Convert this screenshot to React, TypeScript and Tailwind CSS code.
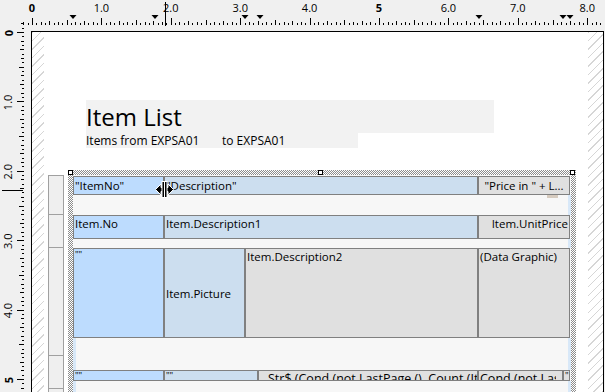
import React from 'react';

// ruler geometry: unit 0 sits at x/y = 32, one unit is ~69.4px, 16 subdivisions
const ORIGIN = 32;
const UNIT = 69.4;
const STEP = UNIT / 16;

const LABELS = ['0', '1.0', '2.0', '3.0', '4.0', '5', '6.0', '7.0', '8.0'];
const MARKERS = [73, 155, 245, 260, 479, 563, 570];

function tickLen(i: number) {
  const m = ((i % 16) + 16) % 16;
  if (m === 0) return 7;
  if (m === 8) return 5;
  if (m % 4 === 0) return 4;
  if (m % 2 === 0) return 3;
  return 2;
}

function TopRuler() {
  const ticks = [];
  for (let i = -2; i < 140; i++) {
    const x = Math.round(ORIGIN + i * STEP) + 0.5;
    if (x > 605) break;
    ticks.push(<line key={i} x1={x} x2={x} y1={25 - tickLen(i)} y2={25} stroke="#000" />);
  }
  // a couple of ticks of the side ruler that poke above the page
  const side = [1, 2].map((k) => {
    const y = Math.round(ORIGIN - k * STEP) + 0.5;
    return <line key={`s${k}`} x1={24 - tickLen(-k)} x2={24} y1={y} y2={y} stroke="#000" />;
  });
  return (
    <svg width="605" height="31" className="block">
      {ticks}
      {side}
      {LABELS.map((l, i) => (
        <text
          key={l}
          x={ORIGIN + i * UNIT}
          y={12}
          textAnchor="middle"
          fontSize="11"
          fontWeight={l === '0' || l === '5' ? 700 : 400}
          fontFamily="'Open Sans', sans-serif"
          fill="#000"
        >
          {l}
        </text>
      ))}
      {MARKERS.map((x) => (
        <polygon key={x} points={`${x - 3.5},15 ${x + 3.5},15 ${x},19`} fill="#000" />
      ))}
      <line x1={165.5} x2={165.5} y1={2} y2={26} stroke="#000" />
    </svg>
  );
}

function SideRuler() {
  const ticks = [];
  for (let i = 0; i < 90; i++) {
    const y = Math.round(i * STEP) + 0.5;
    if (y > 361) break;
    ticks.push(<line key={i} x1={24 - tickLen(i)} x2={24} y1={y + 1} y2={y + 1} stroke="#000" />);
  }
  return (
    <svg width="31" height="361" className="block overflow-visible">
      {ticks}
      {LABELS.map((l, i) => {
        const y = 2 + i * UNIT;
        return (
          <text
            key={l}
            x={8}
            y={y}
            transform={`rotate(-90 8 ${y})`}
            textAnchor="middle"
            dominantBaseline="central"
            fontSize="11"
            fontWeight={l === '0' || l === '5' ? 700 : 400}
            fontFamily="'Open Sans', sans-serif"
            fill="#000"
          >
            {l}
          </text>
        );
      })}
      <line x1={2} x2={23} y1={159.5} y2={159.5} stroke="#000" />
    </svg>
  );
}

// the horizontal split cursor hovering over the column seam
function SplitCursor() {
  return (
    <svg width="19" height="17" viewBox="0 0 19 17" className="absolute left-[87px] top-[11px]">
      <g fill="#000" stroke="#fff" strokeWidth="1" strokeLinejoin="miter">
        <path d="M0.5 8.5 L6 3 L6 6.5 L7.5 6.5 L7.5 10.5 L6 10.5 L6 14 Z" />
        <path d="M18.5 8.5 L13 3 L13 6.5 L11.5 6.5 L11.5 10.5 L13 10.5 L13 14 Z" />
        <rect x="7" y="0.5" width="2.5" height="16" />
        <rect x="9.5" y="0.5" width="2.5" height="16" />
      </g>
    </svg>
  );
}

const cell = 'border border-[#808080] overflow-hidden whitespace-nowrap px-[1px] text-black';
const blue = 'bg-[#bddcfe]';
const steel = 'bg-[#ccdeef]';
const grey = 'bg-[#e0e0e0]';
const hatch =
  'bg-[repeating-linear-gradient(135deg,#d6d6d6_0px,#d6d6d6_1px,transparent_1px,transparent_6px)]';

function ReportTable() {
  return (
    <div className="relative ml-[4px] h-full w-[508px] bg-[repeating-conic-gradient(#8c8c8c_0_25%,#ffffff_0_50%)] bg-[length:2px_2px] px-[5px] pt-[5px]">
      <div className="flex h-full flex-col bg-[#f7f7f7] text-[11.5px] leading-[15px]">
        {/* header */}
        <div className="mt-[1px] flex h-[19px]">
          <div className={`${cell} ${blue} w-[91px] pt-[1px]`}>"ItemNo"</div>
          <div className={`${cell} ${steel} w-[314px] pt-[1px]`}>"Description"</div>
          <div className={`${cell} ${grey} w-[92px] pt-[1px] text-center`}>"Price in " + L...</div>
        </div>
        <div className="h-[20px] border-r-[3px] border-[#d8e8f8]" />

        {/* detail 1 */}
        <div className="flex h-[24px]">
          <div className={`${cell} ${blue} w-[91px]`}>Item.No</div>
          <div className={`${cell} ${steel} w-[314px]`}>Item.Description1</div>
          <div className={`${cell} ${grey} w-[92px] text-right`}>Item.UnitPrice</div>
        </div>
        <div className="h-[9px] border-r-[3px] border-[#d8e8f8]" />

        {/* detail 2 */}
        <div className="flex h-[90px]">
          <div className={`${cell} ${blue} w-[91px] text-[9px] leading-[12px]`}>""</div>
          <div className={`${cell} ${steel} flex w-[81px] items-center`}>Item.Picture</div>
          <div className={`${cell} ${grey} w-[233px]`}>Item.Description2</div>
          <div className={`${cell} ${grey} w-[92px]`}>(Data Graphic)</div>
        </div>
        <div className="h-[32px] border-l-[3px] border-r-[3px] border-[#d8e8f8]" />

        {/* page footer */}
        <div className="flex h-[11px] text-[12.5px] leading-[15px]">
          <div className={`${cell} ${blue} w-[91px] text-[9px] leading-[10px]`}>""</div>
          <div className={`${cell} ${steel} w-[94px] text-[9px] leading-[10px]`}>""</div>
          <div className={`${cell} ${grey} w-[220px] pl-[9px]`}>Str$ (Cond (not LastPage (), Count (Item.No)))</div>
          <div className={`${cell} ${grey} w-[85px] pr-[6px]`}>
            <div className="overflow-hidden">Cond (not LastPage (), "", "")</div>
          </div>
          <div className={`${cell} ${grey} w-[7px] px-0 text-[9px] leading-[10px]`}>"</div>
        </div>
        <div className="flex-1 border-l-[3px] border-r-[3px] border-[#d8e8f8]" />
      </div>

      {/* selection handles */}
      <div className="absolute left-0 top-0 h-[5px] w-[5px] border border-black bg-white" />
      <div className="absolute left-[250px] top-0 h-[5px] w-[5px] border border-black bg-white" />
      <div className="absolute left-[502px] top-0 h-[5px] w-[5px] border border-black bg-white" />
      <div className="absolute left-[479px] top-[25px] h-[3px] w-[11px] bg-[#d6cbbf]" />
      <SplitCursor />
    </div>
  );
}

function BandBar() {
  return (
    <div className="ml-[4px] mt-[5px] flex w-[16px] flex-col border-x border-t border-[#a0a0a0] bg-[#efefef]">
      <div className="h-[39px] border-b border-[#a0a0a0]" />
      <div className="h-[33px] border-b border-[#a0a0a0]" />
      <div className="h-[108px] border-b border-[#a0a0a0]" />
      <div className="h-[33px] border-b border-[#a0a0a0]" />
      <div className="h-[20px]" />
    </div>
  );
}

export default function App() {
  return (
    <div className="grid h-[392px] w-[605px] grid-cols-[31px_574px] grid-rows-[31px_361px] overflow-hidden bg-[#f0f0f0] font-['Open_Sans',sans-serif]">
      <div className="col-span-2">
        <TopRuler />
      </div>
      <SideRuler />

      {/* the page */}
      <div className="flex w-[573px] border-l border-r border-t border-black bg-white">
        <div className={`w-[12px] ${hatch}`} />
        <div className="flex min-w-0 flex-1 flex-col">
          <div className="ml-[42px] mt-[68px] h-[33px] w-[408px] bg-[#f2f2f2] text-[24px] leading-[33px] text-black">
            Item List
          </div>
          <div className="ml-[42px] h-[15px] w-[272px] bg-[#f2f2f2] text-[12px] leading-[15px] text-black">
            <span className="inline-block w-[136px]">Items from EXPSA01</span>
            <span>to EXPSA01</span>
          </div>
          <div className="mt-[22px] flex min-h-0 flex-1 items-start">
            <BandBar />
            <ReportTable />
          </div>
        </div>
        <div className={`w-[15px] ${hatch}`} />
      </div>
    </div>
  );
}
